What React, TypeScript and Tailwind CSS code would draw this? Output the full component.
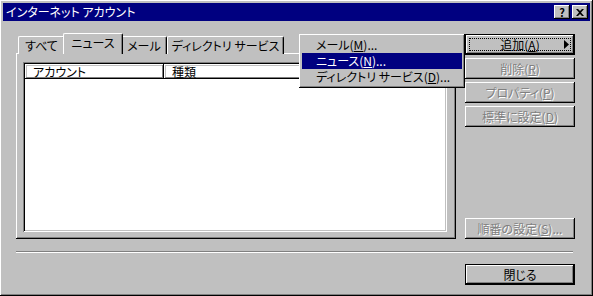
import React from "react";

const raised =
  "shadow-[inset_-1px_-1px_#000000,inset_1px_1px_#ffffff,inset_-2px_-2px_#808080,inset_2px_2px_#c0c0c0]";
const sunken =
  "shadow-[inset_1px_1px_#808080,inset_-1px_-1px_#ffffff,inset_2px_2px_#000000,inset_-2px_-2px_#c0c0c0]";
const disabled = "text-[#808080] [text-shadow:1px_1px_0_#ffffff]";

const Btn = ({
  children,
  off,
  def,
  focus,
  arrow,
  className = "",
}: {
  children: React.ReactNode;
  off?: boolean;
  def?: boolean;
  focus?: boolean;
  arrow?: boolean;
  className?: string;
}) => (
  <div
    className={`relative h-[21px] w-[110px] flex items-center justify-center bg-[#c0c0c0] ${
      def ? "border border-black" : ""
    } ${className}`}
  >
    <div className={`absolute inset-0 ${raised}`} />
    {focus && <div className="absolute inset-[3px] border border-dotted border-black" />}
    <span className={`relative leading-none ${off ? disabled : "text-black"}`}>{children}</span>
    {arrow && (
      <svg className="absolute right-[5px] top-[5px]" width="5" height="9" viewBox="0 0 5 9">
        <path d="M0 0l5 4.5L0 9z" fill="#000" />
      </svg>
    )}
  </div>
);

const Tab = ({ label, w, active }: { label: string; w: number; active?: boolean }) => (
  <div
    className={`relative flex items-center justify-center border-l border-t border-white border-r border-r-black rounded-t-[2px] shadow-[inset_-1px_0_#808080] bg-[#c0c0c0] ${
      active ? "h-[21px] -mx-[2px] z-10 -mb-px pb-[2px]" : "h-[18px] mt-[3px]"
    }`}
    style={{ width: active ? w + 4 : w }}
  >
    {label}
  </div>
);

export default function App() {
  return (
    <div
      className={`relative w-[593px] h-[296px] bg-[#c0c0c0] p-[3px] flex flex-col text-[12px] text-black select-none ${raised} font-['Noto_Sans_CJK_JP',sans-serif] [font-feature-settings:'palt']`}
    >
      {/* Title bar */}
      <div className="h-[18px] bg-[#000080] flex items-center pl-[3px] pr-[2px] text-white">
        <span className="leading-none">インターネット アカウント</span>
        <div className="ml-auto flex gap-[2px]">
          <div className={`relative w-[16px] h-[14px] bg-[#c0c0c0] ${raised} flex items-center justify-center text-black font-bold text-[11px] leading-none`}>
            ?
          </div>
          <div className={`relative w-[16px] h-[14px] bg-[#c0c0c0] ${raised} flex items-center justify-center`}>
            <svg width="8" height="7" viewBox="0 0 8 7">
              <path d="M0 0h2l2 2 2-2h2L5 3.5 8 7H6L4 5 2 7H0l3-3.5z" fill="#000" />
            </svg>
          </div>
        </div>
      </div>

      {/* Body */}
      <div className="flex-1 flex flex-col pl-[13px] pr-[15px] pt-[12px]">
        <div className="flex gap-[9px]">
          {/* Left: tabs + panel */}
          <div className="w-[440px] flex flex-col">
            <div className="flex h-[20px] pl-[2px] items-start">
              <Tab label="すべて" w={47} />
              <Tab label="ニュース" w={56} active />
              <Tab label="メール" w={46} />
              <Tab label="ディレクトリ サービス" w={117} />
            </div>
            <div className={`h-[186px] pl-[7px] pt-[9px] pr-[9px] pb-[7px] ${raised}`}>
              <div className={`h-full bg-white p-[2px] ${sunken}`}>
                <div className="flex h-[15px]">
                  <div className={`w-[139px] flex items-center pl-[8px] ${raised}`}>アカウント</div>
                  <div className={`flex-1 flex items-center pl-[8px] ${raised}`}>種類</div>
                </div>
              </div>
            </div>
          </div>

          {/* Right: buttons */}
          <div className="flex flex-col gap-[3px] pt-px pb-px h-[207px]">
            <Btn def focus arrow>
              追加(<span className="underline">A</span>)
            </Btn>
            <Btn off>
              削除(<span className="underline">R</span>)
            </Btn>
            <Btn off>
              プロパティ(<span className="underline">P</span>)
            </Btn>
            <Btn off>
              標準に設定(<span className="underline">D</span>)
            </Btn>
            <Btn off className="mt-auto">
              順番の設定(<span className="underline">S</span>)...
            </Btn>
          </div>
        </div>

        {/* Separator */}
        <div className="mt-[11px] mr-[2px] h-[2px] border-t border-[#808080] border-b border-b-white" />

        <div className="flex justify-end mt-[11px]">
          <Btn def>閉じる</Btn>
        </div>
      </div>

      {/* Popup menu */}
      <div className={`absolute left-[299px] top-[34px] w-[166px] h-[54px] bg-[#c0c0c0] p-[3px] ${raised}`}>
        <div className="h-[16px] flex items-center pl-[14px]">
          メール(<span className="underline">M</span>)...
        </div>
        <div className="h-[16px] flex items-center pl-[14px] bg-[#000080] text-white">
          ニュース(<span className="underline">N</span>)...
        </div>
        <div className="h-[16px] flex items-center pl-[14px]">
          ディレクトリ サービス(<span className="underline">D</span>)...
        </div>
      </div>
    </div>
  );
}
